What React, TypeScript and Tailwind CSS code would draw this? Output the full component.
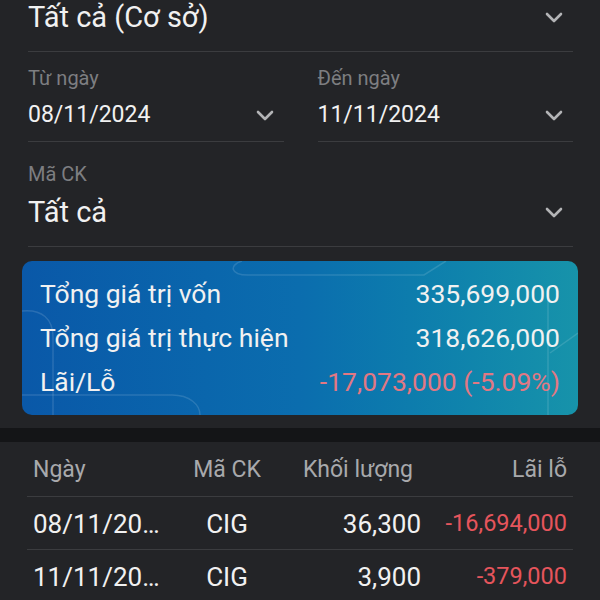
import React from "react"

function Chevron() {
  return (
    <svg width="18" height="11" viewBox="0 0 18 11" className="shrink-0">
      <polyline
        points="2,2 9,9 16,2"
        fill="none"
        stroke="#b3b4b6"
        strokeWidth="2.6"
        strokeLinecap="round"
        strokeLinejoin="round"
      />
    </svg>
  )
}

const rows = [
  { date: "08/11/20…", code: "CIG", qty: "36,300", pl: "-16,694,000" },
  { date: "11/11/20…", code: "CIG", qty: "3,900", pl: "-379,000" },
]

export default function App() {
  return (
    <div className="w-[600px] h-[600px] overflow-hidden bg-[#232427] font-['Roboto',sans-serif] text-[#f1f1f1]">
      {/* FILTERS */}
      <div className="pl-[28px] pr-[27px]">
        <div className="flex h-[52px] items-start justify-between border-b border-[#3b3c3f] pr-[10px]">
          <span className="text-[29px] leading-[35px]">Tất cả (Cơ sở)</span>
          <div className="pt-[12px]">
            <Chevron />
          </div>
        </div>

        <div className="grid grid-cols-2 gap-[34px]">
          <div className="border-b border-[#3b3c3f] pt-[14px] pb-[11px]">
            <p className="text-[20px] leading-[24px] text-[#7d7e81]">Từ ngày</p>
            <div className="mt-[10px] flex h-[30px] items-center justify-between pr-[10px]">
              <span className="text-[23px] leading-[30px]">08/11/2024</span>
              <Chevron />
            </div>
          </div>
          <div className="border-b border-[#3b3c3f] pt-[14px] pb-[11px]">
            <p className="text-[20px] leading-[24px] text-[#7d7e81]">Đến ngày</p>
            <div className="mt-[10px] flex h-[30px] items-center justify-between pr-[10px]">
              <span className="text-[23px] leading-[30px]">11/11/2024</span>
              <Chevron />
            </div>
          </div>
        </div>

        <div className="border-b border-[#3b3c3f] pt-[20px] pb-[16px]">
          <p className="text-[20px] leading-[24px] text-[#7d7e81]">Mã CK</p>
          <div className="mt-[8px] flex h-[36px] items-center justify-between pr-[10px]">
            <span className="text-[29px] leading-[36px]">Tất cả</span>
            <Chevron />
          </div>
        </div>
      </div>

      {/* SUMMARY CARD */}
      <div className="px-[22px] pt-[14px]">
        <div className="relative overflow-hidden rounded-[10px] bg-gradient-to-r from-[#0a58a8] via-[#0b6dae] to-[#1793aa] px-[18px] py-[11px]">
          <svg
            className="pointer-events-none absolute inset-0"
            width="556"
            height="154"
            viewBox="0 0 556 154"
            fill="none"
            stroke="#ffffff"
            strokeOpacity="0.13"
            strokeWidth="1.5"
          >
            <path d="M220,0 C207,4 208,14 226,14 L402,14 L424,0" />
            <path d="M0,50 C20,48 31,58 31,76 L31,154" />
            <path d="M0,134 L150,134 C168,134 178,144 178,154" />
            <path d="M526,30 L526,154" />
            <path d="M528,92 L556,72" />
          </svg>

          <div className="relative flex h-[44px] items-center justify-between text-[26.5px]">
            <span>Tổng giá trị vốn</span>
            <span>335,699,000</span>
          </div>
          <div className="relative flex h-[44px] items-center justify-between text-[26.5px]">
            <span>Tổng giá trị thực hiện</span>
            <span>318,626,000</span>
          </div>
          <div className="relative flex h-[44px] items-center justify-between text-[26.5px]">
            <span>Lãi/Lỗ</span>
            <span className="text-[#e27883]">-17,073,000 (-5.09%)</span>
          </div>
        </div>
      </div>

      <div className="mt-[13px] h-[14px] bg-[#141517]" />

      {/* TABLE */}
      <div className="mx-[27px]">
        <div className="grid h-[55px] grid-cols-[148px_104px_142px_1fr] items-center border-b border-[#3b3c3f] pt-[2px] text-[23px] text-[#a8a9ac]">
          <span className="pl-[6px]">Ngày</span>
          <span className="text-center">Mã CK</span>
          <span className="text-right pr-[8px]">Khối lượng</span>
          <span className="text-right pr-[6px]">Lãi lỗ</span>
        </div>
        {rows.map((r) => (
          <div
            key={r.date}
            className="grid h-[53px] grid-cols-[148px_104px_142px_1fr] items-center border-b border-[#3b3c3f] pt-[2px]"
          >
            <span className="pl-[6px] text-[26px]">{r.date}</span>
            <span className="text-center text-[26px]">{r.code}</span>
            <span className="text-right text-[26px]">{r.qty}</span>
            <span className="text-right pr-[6px] text-[23.5px] text-[#e6555c]">{r.pl}</span>
          </div>
        ))}
      </div>
    </div>
  )
}
